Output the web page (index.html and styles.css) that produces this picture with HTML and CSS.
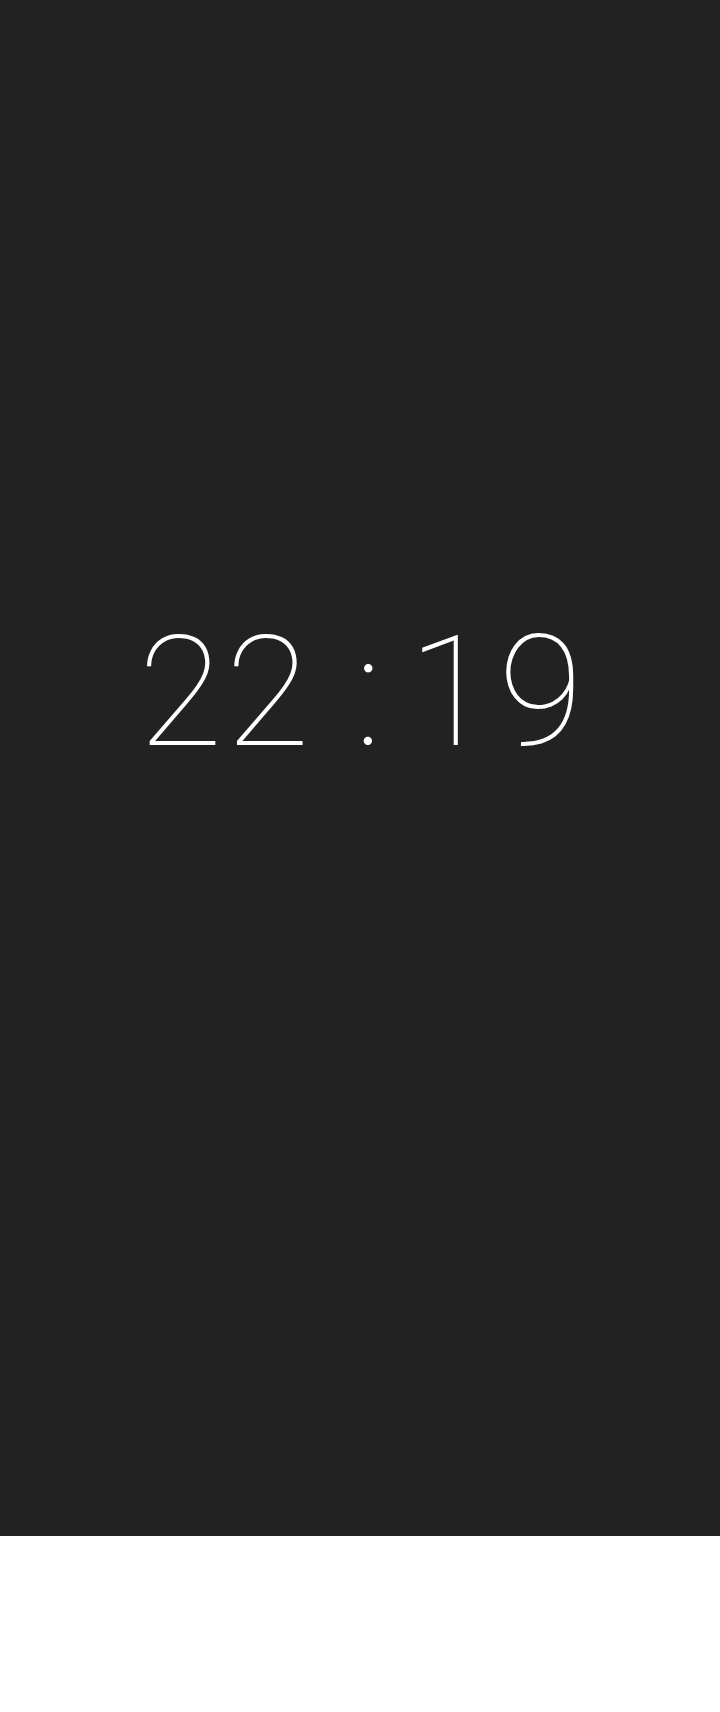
FILE: index.html
```html
<!DOCTYPE html>
<html>
<head>
<meta charset="utf-8">
<link rel="stylesheet" href="styles.css">
</head>
<body>
<div class="screen">
  <div class="clock"><span class="hh">22</span><span class="sep">:</span><span class="mm">19</span></div>
</div>
</body>
</html>
```
FILE: styles.css
```css
html, body { margin: 0; padding: 0; background: #ffffff; }
.screen {
  height: 1536px;
  background: #222222;
  box-sizing: border-box;
  padding-top: 616px;
  display: flex;
  justify-content: center;
}
.clock {
  font-family: Roboto, "Noto Sans", sans-serif;
  font-weight: 100;
  font-size: 154px;
  line-height: 1;
  color: #ffffff;
  display: flex;
  align-items: baseline;
  padding-left: 7px;
}
.hh { letter-spacing: 3px; }
.mm { letter-spacing: 6px; }
.sep { margin: 0 26px 0 42px; }
```
